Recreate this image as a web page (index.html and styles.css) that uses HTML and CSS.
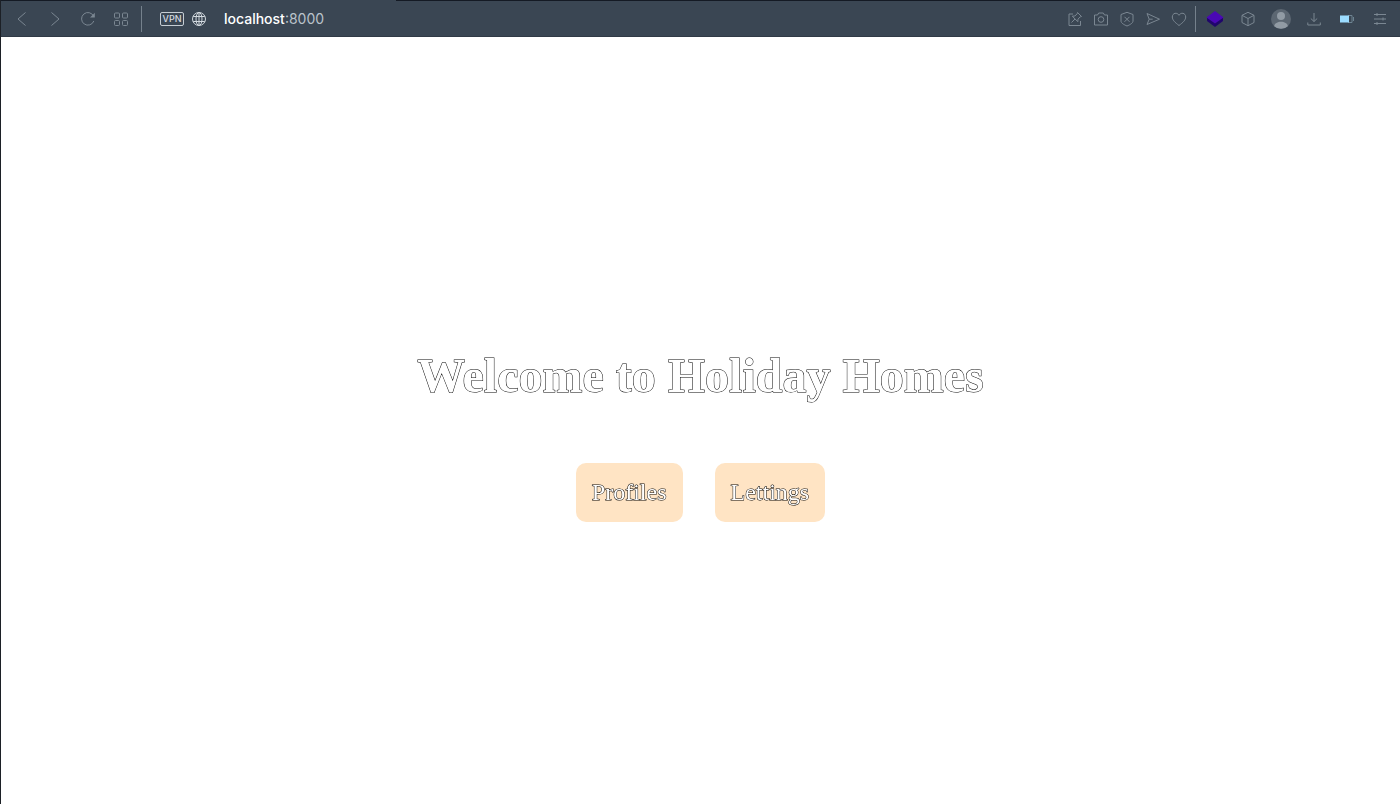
FILE: index.html
```
<!DOCTYPE html>
<html lang="en">
<head>
<meta charset="utf-8">
<meta name="viewport" content="width=device-width, initial-scale=1">
<title>Holiday Homes</title>
<link rel="stylesheet" href="styles.css">
</head>
<body>
<div class="window">
  <div class="tab-edge"><span class="tab-edge-active"></span></div>
  <header class="toolbar">
    <nav class="nav-buttons" aria-label="Navigation">
      <button class="tool" aria-label="Back"><svg viewBox="0 0 18 18"><path d="M12.5 2.5 5 9l7.500 6.500"/></svg></button>
      <button class="tool" aria-label="Forward"><svg viewBox="0 0 18 18"><path d="M5.500 2.500 13 9l-7.500 6.500"/></svg></button>
      <button class="tool" aria-label="Reload"><svg viewBox="0 0 18 18"><path d="M14.800 11A6.300 6.300 0 1 1 14.600 6.200"/><path class="solid" d="M15.800 2.800v4.700H11z"/></svg></button>
      <button class="tool" aria-label="Speed dial"><svg viewBox="0 0 18 18"><rect x="2.500" y="3" width="5" height="5" rx="1"/><rect x="10.500" y="3" width="5" height="5" rx="1"/><rect x="2.500" y="10.500" width="5" height="5" rx="1"/><rect x="10.500" y="10.500" width="5" height="5" rx="1"/></svg></button>
    </nav>
    <span class="divider"></span>
    <div class="address">
      <button class="vpn">VPN</button>
      <button class="tool bright" aria-label="Site information"><svg viewBox="0 0 18 18"><circle cx="9" cy="9" r="6.500"/><ellipse cx="9" cy="9" rx="3" ry="6.500"/><path d="M9 2.500v13M3.200 6.500h11.600M3.200 11.500h11.600"/></svg></button>
      <span class="url">localhost<span class="port">:8000</span></span>
    </div>
    <div class="page-actions">
      <button class="tool" aria-label="Pin page"><svg viewBox="0 0 18 18"><path d="M7 4H3v11.500h11.500V11"/><path d="m11.500 2.500 4 4-1.200.3-2.300 2.300-.2 2.600L6.300 6.200l2.600-.2 2.300-2.300zM9 9l-3.500 3.500"/></svg></button>
      <button class="tool" aria-label="Snapshot"><svg viewBox="0 0 18 18"><path d="M2.500 5h3l1.200-2h4.600l1.200 2h3v10h-13z"/><circle cx="9" cy="9.500" r="2.800"/></svg></button>
      <button class="tool" aria-label="Ad blocker"><svg viewBox="0 0 18 18"><path d="M9 2.300 15 4.500v6.500c0 2-3 3.800-6 5-3-1.200-6-3-6-5V4.500z"/><path d="m6.500 6.800 5 5m0-5-5 5"/></svg></button>
      <button class="tool" aria-label="Send to My Flow"><svg viewBox="0 0 18 18"><path d="m3 3.500 12.500 5.700L3 14.500l2.200-5.300zM5.200 9.200h3.500"/></svg></button>
      <button class="tool" aria-label="Save to bookmarks"><svg viewBox="0 0 18 18"><path d="M9 15.500C5 12.500 2.300 10 2.300 7c0-4.200 5-5 6.700-1.700C10.700 2 15.700 2.800 15.700 7c0 3-2.700 5.500-6.700 8.500z"/></svg></button>
    </div>
    <span class="divider"></span>
    <div class="extensions">
      <button class="tool" aria-label="Layers extension"><svg viewBox="0 0 18 18"><path class="layer-low" d="m1 11 8 6 8-6V8H1z"/><path class="layer-top" d="m9 1 8.500 6.500L9 13.500.500 7.500z"/></svg></button>
      <button class="tool" aria-label="Extensions"><svg viewBox="0 0 18 18"><path d="m9 2.300 6 3v7.200l-6 3.200-6-3.200V5.300zM3 5.300l6 3.200 6-3.200M9 8.500v7.200"/></svg></button>
      <button class="tool avatar" aria-label="Profile"><svg viewBox="0 0 20 20"><circle class="avatar-disc" cx="10" cy="10" r="10"/><circle class="avatar-person" cx="10" cy="7" r="4"/><path class="avatar-person" d="M3.200 17.200c.3-6 13.300-6 13.600 0A10 10 0 0 1 3.200 17.200z"/></svg></button>
      <button class="tool" aria-label="Downloads"><svg viewBox="0 0 18 18"><path d="M9 3v8.500M5.800 8.500 9 11.500l3.200-3M2.800 12.500v2.500h12.500v-2.500"/></svg></button>
      <button class="tool" aria-label="Battery saver"><svg viewBox="0 0 18 18"><path class="battery-case" d="M10 5.500h4v7h-4M15.500 7v4"/><rect class="battery-fill" x="2" y="5.500" width="9" height="7"/></svg></button>
      <button class="tool" aria-label="Easy setup"><svg viewBox="0 0 18 18"><path d="M3 4.500h12M3 9h12M3 13.500h12M6 3v3M12 7.500v3M6 12v3"/></svg></button>
    </div>
  </header>
  <main class="page">
    <h1 class="title">Welcome to Holiday Homes</h1>
    <nav class="links" aria-label="Sections">
      <a class="link" href="#profiles">Profiles</a>
      <a class="link" href="#lettings">Lettings</a>
    </nav>
  </main>
</div>
</body>
</html>
```
FILE: styles.css
```
* {
  box-sizing: border-box;
}

body {
  margin: 0;
  background: #fff;
}

.window {
  display: flex;
  flex-direction: column;
  min-height: 100vh;
  border-left: 1px solid #1c2026;
}

.tab-edge {
  height: 1px;
  padding-left: 199px;
  background: #141a24;
}

.tab-edge-active {
  display: block;
  width: 196px;
  height: 1px;
  background: #3a4653;
}

.toolbar {
  display: flex;
  align-items: center;
  height: 36px;
  padding: 0 11px 0 12px;
  background: #3a4653;
  border-bottom: 1px solid #303a46;
  font-family: Inter, "Liberation Sans", sans-serif;
}

.nav-buttons {
  display: flex;
  gap: 15px;
}

.tool {
  flex: none;
  width: 18px;
  height: 18px;
  padding: 0;
  border: 0;
  background: none;
  color: #7b8792;
}

.tool svg {
  display: block;
  width: 100%;
  height: 100%;
  fill: none;
  stroke: currentColor;
  stroke-width: 1;
}

.tool .solid {
  fill: currentColor;
  stroke: none;
}

.bright {
  color: #d2d9df;
}

.divider {
  flex: none;
  width: 1px;
  height: 26px;
  background: #75818c;
}

.nav-buttons + .divider {
  margin-left: 11px;
}

.address {
  display: flex;
  flex: 1;
  align-items: center;
  padding-left: 18px;
}

.vpn {
  width: 24px;
  height: 14px;
  margin-right: 6px;
  padding: 0;
  border: 1px solid #c5cdd4;
  border-radius: 2px;
  background: none;
  color: #d5dbe0;
  font: 500 9px/12px Inter, "Liberation Sans", sans-serif;
}

.url {
  margin-left: 16px;
  color: #fff;
  font-size: 14px;
  font-weight: 500;
  line-height: 18px;
}

.port {
  color: #bac3cb;
  font-weight: 400;
}

.page-actions {
  display: flex;
  gap: 8px;
  margin-right: 7px;
}

.extensions {
  display: flex;
  align-items: center;
  gap: 15px;
  padding-left: 10px;
}

.avatar {
  width: 20px;
  height: 20px;
  margin: 0 -1px;
}

.tool .layer-low {
  fill: #20066b;
  stroke: none;
}

.tool .layer-top {
  fill: #4a08b5;
  stroke: none;
}

.tool .avatar-disc {
  fill: #5c6772;
  stroke: none;
}

.tool .avatar-person {
  fill: #919ba4;
  stroke: none;
}

.tool .battery-case {
  stroke: #6d8391;
}

.tool .battery-fill {
  fill: #9bdcff;
  stroke: none;
}

.page {
  display: flex;
  flex: 1;
  flex-direction: column;
  align-items: center;
  justify-content: center;
  gap: 60px;
  padding-top: 28px;
  font-family: "Liberation Serif", "Times New Roman", serif;
  will-change: opacity;
}

.title,
.link {
  color: #fff;
  -webkit-text-stroke: 1px #000;
  paint-order: stroke fill;
}

.title {
  margin: 0;
  font-size: 48px;
  font-weight: 700;
  text-align: center;
}

.links {
  display: flex;
  gap: 32px;
}

.link {
  padding: 16px;
  border-radius: 10px;
  background: #ffe4c4;
  font-size: 24px;
  text-decoration: none;
}
```
